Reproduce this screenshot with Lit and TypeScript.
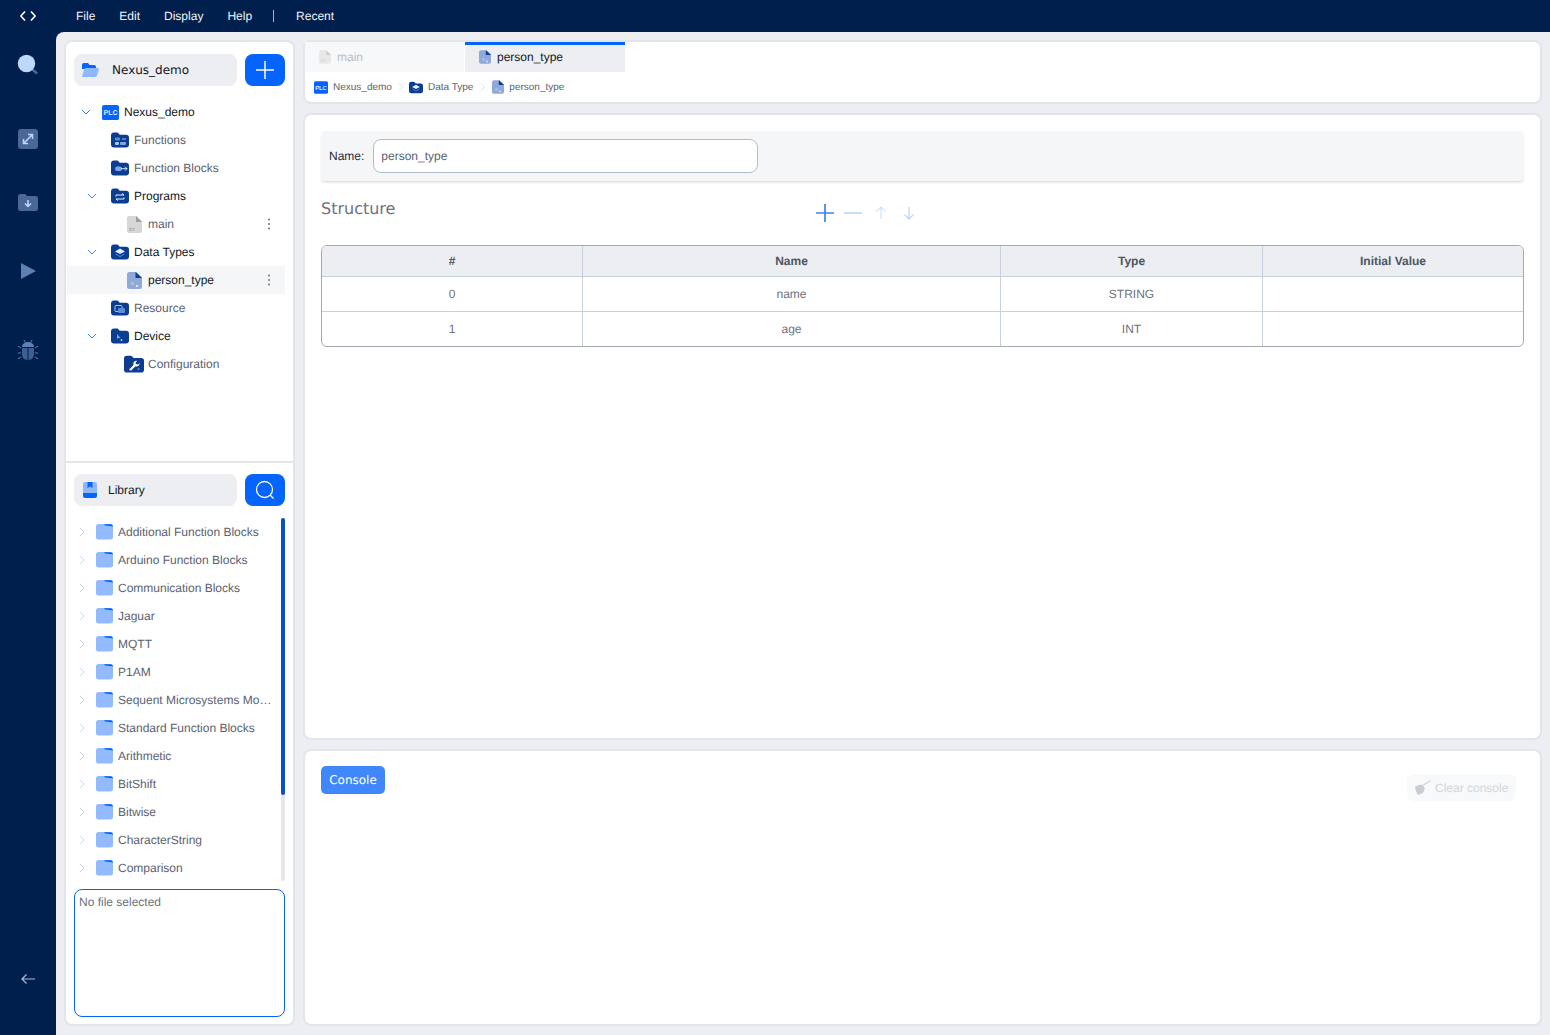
import { LitElement, html, svg, css, nothing } from 'lit';
import { customElement } from 'lit/decorators.js';

// little tree icons
const folder = (inner: unknown) => html`<svg class="ficon" viewBox="0 0 18 16">
  <path d="M0 3.500A3 3 0 0 1 3 .5h2.700c1 0 1.500.5 2.200 1.300l.8 1h6.300A3 3 0 0 1 18 5.800V12.500a3 3 0 0 1-3 3H3a3 3 0 0 1-3-3z" fill="#0b3d91"/>
  ${inner}
</svg>`;

const icons: Record<string, unknown> = {
  plc: html`<svg class="plc" viewBox="0 0 18 16"><rect width="18" height="16" rx="2" fill="#0464fb"/>
    <text x="9" y="10.800" text-anchor="middle" font-size="7.500" font-weight="700" fill="#dbe8ff" font-family="Liberation Sans">PLC</text></svg>`,
  functions: folder(svg`<rect x="4" y="5.500" width="5" height="3" rx="1" fill="#5f8ad8"/><rect x="4" y="10" width="4" height="3" rx="1" fill="#a9c4f5"/><rect x="9" y="10" width="6" height="3" rx="1" fill="#7fa5e8"/><path d="M11 7h4" stroke="#a9c4f5"/>`),
  blocks: folder(svg`<rect x="4" y="6.500" width="7" height="4.500" rx="2.200" fill="#7fa5e8"/><path d="M10 8.700h6m-2-2 2 2-2 2" stroke="#dbe8ff" fill="none"/>`),
  programs: folder(svg`<path d="M5 8.500V7h8m-2-1.500L13 7M13 9.500V11H5m2 1.500L5 11" stroke="#e6efff" fill="none"/>`),
  datatypes: folder(svg`<path d="M9 4.500 14 7.500 9 10 4 7.500z" fill="#e6efff"/><path d="M4.500 10 9 12.500 13.500 10" stroke="#5f8ad8" fill="none"/>`),
  resource: folder(svg`<rect x="4" y="5.500" width="7" height="6" rx="1" fill="none" stroke="#a9c4f5"/><rect x="7" y="8" width="7" height="5" rx="1" fill="#5f8ad8"/>`),
  device: folder(svg`<path d="M6 6v5l1.500-1h2z" fill="#7fa5e8"/><path d="M10.500 11v2M9.500 12h2" stroke="#a9c4f5"/>`),
  config: html`<svg class="ficon cfg" viewBox="0 0 20 18">
    <path d="M0 3.500A2.800 2.800 0 0 1 2.800.7h3.700c1 0 1.500.6 2.200 1.400l.8 1h7.700A2.800 2.800 0 0 1 20 5.900v8.900a2.800 2.800 0 0 1-2.800 2.800H2.800A2.800 2.800 0 0 1 0 14.800z" fill="#0b3d91"/>
    <path d="M5 14.500 9.500 10a3 3 0 0 1 3.700-4l-1.800 1.800.9 1.500 1.700.2 1.500-1.600a3 3 0 0 1-4 3.400l-4.500 4.400z" fill="#fff"/>
    <circle cx="14.500" cy="14" r="1.200" fill="#4a78cc"/>
  </svg>`,
  st: html`<svg class="file" viewBox="0 0 15 17"><path d="M2.500 0h7L15 5.500V14.500a2.500 2.500 0 0 1-2.500 2.500h-10A2.500 2.500 0 0 1 0 14.500v-12A2.500 2.500 0 0 1 2.500 0z" fill="#d6d6d6"/><path d="M9 0l6 6H9z" fill="#9e9e9e"/>
    <text x="2" y="14.500" font-size="4.500" font-weight="700" fill="#a8a8a8" font-family="Liberation Sans">ST</text></svg>`,
  dt: html`<svg class="file" viewBox="0 0 15 17"><path d="M2.500 0h7L15 5.500V14.500a2.500 2.500 0 0 1-2.500 2.500h-10A2.500 2.500 0 0 1 0 14.500v-12A2.500 2.500 0 0 1 2.500 0z" fill="#8fa9d8"/><path d="M8.500 0 15 6H8.500z" fill="#0b3d91"/>
    <rect x="4" y="10" width="3" height="3" fill="#a9bfe6"/><rect x="9" y="13" width="2" height="2" fill="#dbe8ff"/></svg>`,
};

const chevDown = html`<svg class="chev" viewBox="0 0 12 12"><path d="M2 4l4 4 4-4" fill="none" stroke="#3b82f6" stroke-width="1"/></svg>`;
const kebab = html`<svg class="kebab" viewBox="0 0 4 14"><circle cx="2" cy="2.500" r="1" fill="#6b7280"/><circle cx="2" cy="7" r="1" fill="#6b7280"/><circle cx="2" cy="11.500" r="1" fill="#6b7280"/></svg>`;

interface TreeRow {
  label: string;
  icon: string;
  cls: string;
  open?: boolean;
  strong?: boolean;
  menu?: boolean;
  active?: boolean;
}

const tree: TreeRow[] = [
  { label: 'Nexus_demo', icon: 'plc', cls: 'root', open: true, strong: true },
  { label: 'Functions', icon: 'functions', cls: 'one' },
  { label: 'Function Blocks', icon: 'blocks', cls: 'one' },
  { label: 'Programs', icon: 'programs', cls: 'one', open: true, strong: true },
  { label: 'main', icon: 'st', cls: 'two', menu: true },
  { label: 'Data Types', icon: 'datatypes', cls: 'one', open: true, strong: true },
  { label: 'person_type', icon: 'dt', cls: 'two', menu: true, active: true, strong: true },
  { label: 'Resource', icon: 'resource', cls: 'one' },
  { label: 'Device', icon: 'device', cls: 'one', open: true, strong: true },
  { label: 'Configuration', icon: 'config', cls: 'three' },
];

const library = [
  'Additional Function Blocks', 'Arduino Function Blocks', 'Communication Blocks', 'Jaguar', 'MQTT', 'P1AM',
  'Sequent Microsystems Modules', 'Standard Function Blocks', 'Arithmetic', 'BitShift', 'Bitwise',
  'CharacterString', 'Comparison',
];

const rows = [
  { n: '0', name: 'name', type: 'STRING', init: '' },
  { n: '1', name: 'age', type: 'INT', init: '' },
];

@customElement('app-root')
export class AppRoot extends LitElement {
  static override styles = css`
    :host {
      display: block;
      width: 1550px;
      height: 1035px;
      overflow: hidden;
      font-family: 'Liberation Sans', Arial, sans-serif;
      font-size: 12px;
      color: #4b5563;
      background: #001f4d;
      text-rendering: geometricPrecision;
    }
    * { box-sizing: border-box; }
    svg { display: block; flex: none; }

    .topbar { height: 32px; display: flex; align-items: center; color: #fff; }
    .logo { width: 56px; display: flex; justify-content: center; }
    .menu { display: flex; align-items: center; padding-left: 20px; gap: 24px; }
    .menu span { color: #f3f4f6; }
    .menu .sep { width: 1px; height: 12px; background: #a9b4c6; margin: 0 -2px 0 -3px; }

    .below { display: flex; height: 1003px; }
    .rail { width: 56px; display: flex; flex-direction: column; align-items: center; padding-top: 22px; }
    .rail .s-search { margin-bottom: 53px; }
    .rail .s-expand { margin-bottom: 44px; }
    .rail .s-import { margin-bottom: 48px; }
    .rail .s-play { margin-bottom: 58px; }
    .rail .back { margin: auto 0 50px; }

    .work {
      flex: 1;
      background: #edeef2;
      border-top-left-radius: 8px;
      padding: 8px 8px 9px;
      display: flex;
      gap: 8px;
      min-width: 0;
    }
    .panel { background: #fff; border: 2px solid #e2e5ea; border-radius: 8px; }

    .side { width: 231px; display: flex; flex-direction: column; }
    .project { height: 421px; padding-top: 12px; border-bottom: 2px solid #e2e5ea; }
    .head { display: flex; gap: 8px; padding: 0 8px; }
    .title {
      flex: 1;
      height: 32px;
      background: #edeef2;
      border-radius: 8px;
      display: flex;
      align-items: center;
      color: #111827;
    }
    .title.proj { font-family: 'DejaVu Sans', sans-serif; font-size: 12px; padding: 0 0 1px 7px; gap: 13px; }
    .title.lib { padding-left: 9px; gap: 11px; }
    .add { width: 40px; height: 32px; border-radius: 8px; background: #0464fb; display: flex; align-items: center; justify-content: center; }

    .tree { margin: 12px 0 0 1px; }
    .row { height: 28px; display: flex; align-items: center; position: relative; width: 218px; color: #5b6270; }
    .row.strong { color: #111827; }
    .row.active { background: #f5f6f8; }
    .chev { width: 12px; height: 12px; position: absolute; top: 8px; }
    .root .chev { left: 13px; }
    .one .chev { left: 19px; }
    .row.root { padding-left: 35px; }
    .row.one { padding-left: 44px; }
    .row.two { padding-left: 60px; }
    .row.three { padding-left: 57px; }
    .plc { width: 17px; height: 15px; margin-right: 5px; }
    .ficon { width: 18px; height: 16px; margin-right: 5px; }
    .ficon.cfg { width: 20px; height: 18px; margin-right: 4px; }
    .file { width: 15px; height: 17px; margin-right: 6px; }
    .kebab { position: absolute; left: 200px; top: 7px; width: 4px; height: 14px; }

    .libpanel { flex: 1; padding-top: 11px; min-height: 0; display: flex; flex-direction: column; }
    .listwrap { display: flex; margin: 12px 8px 0 0; height: 363px; }
    .list { flex: 1; min-width: 0; }
    .lrow { height: 28px; display: flex; align-items: center; padding-left: 10px; }
    .lrow .right { width: 12px; height: 12px; margin-right: 8px; }
    .folder { width: 17px; height: 16px; margin-right: 5px; }
    .lname { white-space: nowrap; overflow: hidden; text-overflow: ellipsis; width: 154px; color: #5b6270; }
    .track { width: 4px; background: #e5e7eb; border-radius: 2px; height: 363px; }
    .thumb { height: 277px; background: #0b50c8; border-radius: 2px; }
    .info {
      margin: 8px 8px 0;
      height: 128px;
      border: 1px solid #0464fb;
      border-radius: 8px;
      padding: 5px 4px;
      color: #6b7280;
    }

    .main { flex: 1; min-width: 0; display: flex; flex-direction: column; gap: 9px; }
    .tabs-panel { height: 64px; flex: none; }
    .tabs { display: flex; height: 30px; }
    .tab { width: 159px; display: flex; align-items: center; padding: 0 0 3px 14px; background: #f7f8fa; color: #b9bdc5; border-top: 3px solid transparent; }
    .tab.on { width: 160px; margin-left: 1px; background: #edeef2; color: #111827; border-top-color: #0464fb; }
    .tab svg { width: 12px; height: 14px; }
    .tab.off svg { opacity: 0.45; }
    .crumbs { display: flex; align-items: center; height: 30px; padding-left: 9px; font-size: 10px; color: #5b6270; }
    .crumbs svg { margin-right: 5px; }
    .crumbs .plc { width: 14px; height: 13px; }
    .crumbs .ficon { width: 14px; height: 13px; }
    .crumbs .file { width: 12px; height: 14px; }
    .crumbs .gt { width: 10px; height: 10px; margin: 0 3px 0 4px; }
    .crumbs .gt.wide { margin: 0 4px 0 5px; }

    .editor { height: 627px; flex: none; padding: 16px 16px 0; }
    .namebar {
      height: 50px;
      background: #f5f6f8;
      border-radius: 4px;
      box-shadow: 0 2px 3px -1px rgba(0, 0, 0, 0.18);
      display: flex;
      align-items: center;
      padding: 0 8px;
      gap: 9px;
      color: #1f2937;
    }
    .input {
      width: 385px;
      height: 34px;
      background: #fff;
      border: 1px solid #b4bace;
      border-radius: 8px;
      display: flex;
      align-items: center;
      padding-left: 7px;
      color: #5b6270;
    }
    .struct { display: flex; height: 64px; }
    .struct h2 {
      margin: 18px 0 0;
      width: 494px;
      font: 400 16px 'DejaVu Sans', sans-serif;
      color: #6b7280;
    }
    .tools { display: flex; gap: 8px; padding-top: 22px; }
    .tools svg { width: 20px; height: 20px; }

    table {
      width: 1203px;
      border-collapse: separate;
      border-spacing: 0;
      border: 1px solid #a3aab5;
      border-radius: 6px;
      table-layout: fixed;
      text-align: center;
      overflow: hidden;
    }
    th { height: 31px; background: #edeef2; font-weight: 700; color: #4b5563; border-bottom: 1px solid #c7ced9; border-left: 1px solid #c7d0dc; }
    td { height: 35px; color: #6b7280; border-top: 1px solid #c7d0dc; border-left: 1px solid #c7d0dc; }
    tr:first-child td { border-top: 0; height: 34px; }
    th:first-child, td:first-child { border-left: 0; }

    .console { flex: 1; padding: 15px 16px; display: flex; justify-content: space-between; align-items: flex-start; }
    .cbtn {
      height: 28px;
      width: 64px;
      border-radius: 5px;
      background: #3f87fb;
      color: #fff;
      font: 12px 'DejaVu Sans', sans-serif;
      display: flex;
      align-items: center;
      justify-content: center;
      padding-bottom: 1px;
    }
    .clear {
      margin: 8px 8px 0 0;
      width: 109px;
      height: 27px;
      border-radius: 7px;
      background: #f8f9fa;
      color: #d1d5db;
      display: flex;
      align-items: center;
      padding-left: 8px;
      gap: 4px;
    }
  `;

  private renderRow(r: TreeRow) {
    const cls = `row ${r.cls} ${r.strong ? 'strong' : ''} ${r.active ? 'active' : ''}`;
    return html`<div class=${cls}>
      ${r.open ? chevDown : nothing}
      ${icons[r.icon]}
      <span>${r.label}</span>
      ${r.menu ? kebab : nothing}
    </div>`;
  }

  override render() {
    return html`
      <div class="topbar">
        <div class="logo">
          <svg width="16" height="12" viewBox="0 0 16 12"><path d="M5 1.500.9 6 5 10.500M11 1.500 15.100 6 11 10.500" fill="none" stroke="#fff" stroke-width="1.600"/></svg>
        </div>
        <div class="menu">
          <span>File</span><span>Edit</span><span>Display</span><span>Help</span><i class="sep"></i><span>Recent</span>
        </div>
      </div>
      <div class="below">
        <nav class="rail">
          <svg class="s-search" width="22" height="22" viewBox="0 0 22 22"><path d="M15 15l5 4.500" stroke="#4a6796" stroke-width="2.500"/><circle cx="9.500" cy="9.500" r="8.700" fill="#bfd7fb"/></svg>
          <svg class="s-expand" width="20" height="20" viewBox="0 0 20 20"><rect width="20" height="20" rx="3" fill="#4a6796"/><path d="M6 14l8-8M10 5.500h4.500V10M10 14.500H5.500V10" stroke="#bfd7fb" stroke-width="1.500" fill="none"/></svg>
          <svg class="s-import" width="20" height="20" viewBox="0 0 20 20"><path d="M0 3.500A2.500 2.500 0 0 1 2.500 1h4c.8 0 1.200.5 1.800 1.200l.7.800h8.500A2.500 2.500 0 0 1 20 5.500v10a2.500 2.500 0 0 1-2.500 2.500h-15A2.500 2.500 0 0 1 0 15.500z" fill="#4a6796"/><path d="M10 7v6.500M7 10.500l3 3 3-3" stroke="#bfd7fb" stroke-width="1.500" fill="none"/></svg>
          <svg class="s-play" width="16" height="20" viewBox="0 0 16 20"><path d="M1 2v16l15-8z" fill="#5f80b5"/></svg>
          <svg width="20" height="22" viewBox="0 0 20 22"><path d="M4 8c0-3 2.500-5 6-5s6 2 6 5z" fill="#5f80b5"/><path d="M4 9h5.500v12C6 21 4 18 4 15zM10.500 9H16v6c0 3-2 6-5.500 6z" fill="#3f5f94"/><path d="M3 9 0 7M3 14H0M3 18l-3 2M17 9l3-2M17 14h3M17 18l3 2M7 3 6 1M13 3l1-2" stroke="#5f80b5"/></svg>
          <svg class="back" width="16" height="12" viewBox="0 0 16 12"><path d="M15 6H2M6.500 1.500 2 6l4.500 4.500" fill="none" stroke="#a9bbd8" stroke-width="1.200"/></svg>
        </nav>
        <div class="work">
          <aside class="panel side">
            <section class="project">
              <div class="head">
                <div class="title proj">
                  <svg width="18" height="16" viewBox="0 0 18 16"><path d="M1 3a2 2 0 0 1 2-2h3c1 0 1.500.5 2 1.200l.6.800H13a2 2 0 0 1 2 2v2H1z" fill="#0464fb"/><path d="M1 14l2.500-7a1.500 1.500 0 0 1 1.500-1h11.500c1 0 1.600.8 1.300 1.700L16 13.500a2 2 0 0 1-2 1.500H2a1 1 0 0 1-1-1z" fill="#8eb8fb"/></svg>
                  <span>Nexus_demo</span>
                </div>
                <div class="add"><svg width="18" height="18" viewBox="0 0 18 18"><path d="M9 0v18M0 9h18" stroke="#fff" stroke-width="1.500"/></svg></div>
              </div>
              <div class="tree">${tree.map((r) => this.renderRow(r))}</div>
            </section>
            <section class="libpanel">
              <div class="head">
                <div class="title lib">
                  <svg width="14" height="16" viewBox="0 0 14 16"><path d="M2 0h10a2 2 0 0 1 2 2v9H0V2a2 2 0 0 1 2-2z" fill="#8eb8fb"/><path d="M0 11h14v3a2 2 0 0 1-2 2H2a2 2 0 0 1-2-2z" fill="#0464fb"/><path d="M4.500 0h5v6L7 4.500 4.500 6z" fill="#0464fb"/></svg>
                  <span>Library</span>
                </div>
                <div class="add"><svg width="20" height="20" viewBox="0 0 20 20"><circle cx="9.500" cy="9.500" r="8" fill="none" stroke="#fff" stroke-width="1.300"/><path d="M15 15l3.500 3.500" stroke="#fff" stroke-width="1.300"/></svg></div>
              </div>
              <div class="listwrap">
                <div class="list">
                  ${library.map((name) => html`<div class="lrow">
                    <svg class="right" viewBox="0 0 12 12"><path d="M4 2l4 4-4 4" fill="none" stroke="#bfd7fb"/></svg>
                    <svg class="folder" viewBox="0 0 17 16"><path d="M0 2.500A2.500 2.500 0 0 1 2.500 0h12A2.500 2.500 0 0 1 17 2.500V13a2.500 2.500 0 0 1-2.500 2.500h-12A2.500 2.500 0 0 1 0 13z" fill="#92bafc"/><path d="M8 .2h6.500A2.500 2.500 0 0 1 17 2.500L9 1.500z" fill="#0464fb"/></svg>
                    <span class="lname">${name}</span>
                  </div>`)}
                </div>
                <div class="track"><div class="thumb"></div></div>
              </div>
              <div class="info">No file selected</div>
            </section>
          </aside>

          <main class="main">
            <section class="panel tabs-panel">
              <div class="tabs">
                <div class="tab off">${icons.st}<span>main</span></div>
                <div class="tab on">${icons.dt}<span>person_type</span></div>
              </div>
              <div class="crumbs">
                ${icons.plc}<span>Nexus_demo</span>
                <svg class="gt" viewBox="0 0 10 10"><path d="M3 1.500 6.500 5 3 8.500" fill="none" stroke="#dbe4f3"/></svg>
                ${icons.datatypes}<span>Data Type</span>
                <svg class="gt wide" viewBox="0 0 10 10"><path d="M3 1.500 6.500 5 3 8.500" fill="none" stroke="#dbe4f3"/></svg>
                ${icons.dt}<span>person_type</span>
              </div>
            </section>

            <section class="panel editor">
              <div class="namebar"><label>Name:</label><div class="input">person_type</div></div>
              <div class="struct">
                <h2>Structure</h2>
                <div class="tools">
                  <svg viewBox="0 0 20 20"><path d="M10 1v18M1 10h18" stroke="#3b82f6" stroke-width="1.700"/></svg>
                  <svg viewBox="0 0 20 20"><path d="M1 10h18" stroke="#bfd7fb" stroke-width="1.700"/></svg>
                  <svg viewBox="0 0 20 20"><path d="M10 16V4M5.500 8.500 10 4l4.500 4.500" fill="none" stroke="#d3e3fb" stroke-width="1.300"/></svg>
                  <svg viewBox="0 0 20 20"><path d="M10 4v12M5.500 11.500 10 16l4.500-4.500" fill="none" stroke="#bfd7fb" stroke-width="1.300"/></svg>
                </div>
              </div>
              <table>
                <colgroup><col style="width:260px"/><col style="width:418px"/><col style="width:262px"/><col/></colgroup>
                <thead><tr><th>#</th><th>Name</th><th>Type</th><th>Initial Value</th></tr></thead>
                <tbody>${rows.map((r) => html`<tr><td>${r.n}</td><td>${r.name}</td><td>${r.type}</td><td>${r.init}</td></tr>`)}</tbody>
              </table>
            </section>

            <section class="panel console">
              <div class="cbtn">Console</div>
              <div class="clear">
                <svg width="16" height="15" viewBox="0 0 16 15"><path d="M7 6 15.500.5" stroke="#d1d5db" stroke-width="1.300"/><path d="M0 6.500 6 4.500 10 8 8 13Q4 15 2.500 14.500 .5 11 0 6.500z" fill="#c9ccd2"/></svg>
                <span>Clear console</span>
              </div>
            </section>
          </main>
        </div>
      </div>
    `;
  }
}

declare global {
  interface HTMLElementTagNameMap {
    'app-root': AppRoot;
  }
}
